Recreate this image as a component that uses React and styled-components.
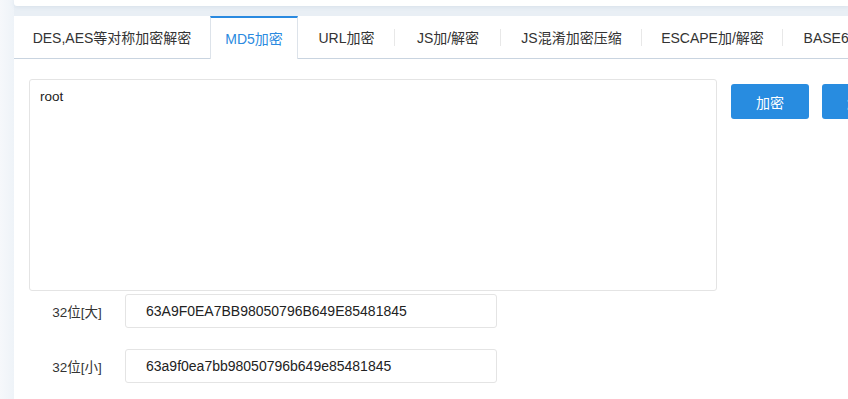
import styled, { createGlobalStyle } from "styled-components";

const GlobalStyle = createGlobalStyle`
  html, body {
    margin: 0;
    padding: 0;
    background: #e9eff5;
    overflow: hidden;
  }
  body {
    font-family: "Helvetica Neue", "Liberation Sans", "Noto Sans CJK SC", sans-serif;
    color: #333;
  }
`;

const Page = styled.div`
  display: flex;
  width: 100%;
  height: 399px;
`;

const Sidebar = styled.div`
  flex: 0 0 14px;
  background: linear-gradient(to right, #f6f8fb, #eef3f8);
`;

const Main = styled.div`
  flex: 1;
  min-width: 0;
  display: flex;
  flex-direction: column;
  gap: 10px;
`;

const TopBar = styled.div`
  height: 6px;
  background: #fff;
  border-bottom-left-radius: 3px;
  box-shadow: 0 1px 4px rgba(120, 150, 180, 0.15);
`;

const Card = styled.div`
  flex: 1;
  width: 900px;
  background: #fff;
  border-top-left-radius: 3px;
`;

const TabList = styled.div`
  display: flex;
  height: 42px;
  border-bottom: 1px solid #c9d4e0;
  white-space: nowrap;
`;

const Tab = styled.div`
  position: relative;
  box-sizing: border-box;
  flex: 0 0 ${(p) => p.$width}px;
  display: flex;
  align-items: center;
  justify-content: center;
  font-size: 14px;
  color: ${(p) => (p.$active ? "#2a8ae0" : "#333")};
  background: #fff;
  ${(p) =>
    p.$active &&
    `
    border-top: 2px solid #2a8ae0;
    border-left: 1px solid #dde3ea;
    border-right: 1px solid #dde3ea;
    margin-bottom: -1px;
    padding-bottom: 1px;
  `}
  &::after {
    content: "";
    display: ${(p) => (p.$sep ? "block" : "none")};
    position: absolute;
    right: 0;
    top: 13px;
    height: 17px;
    width: 1px;
    background: #e8e8e8;
  }
`;

const Content = styled.div`
  padding: 20px 0 0 15px;
`;

const EditorRow = styled.div`
  display: flex;
  align-items: flex-start;
  gap: 14px;
`;

const Editor = styled.textarea`
  box-sizing: border-box;
  width: 688px;
  height: 212px;
  padding: 9px 10px;
  border: 1px solid #e4e4e4;
  border-radius: 3px;
  resize: none;
  font-family: inherit;
  font-size: 13.5px;
  color: #222;
  outline: none;
`;

const Buttons = styled.div`
  display: flex;
  gap: 13px;
  padding-top: 5px;
`;

const Button = styled.button`
  width: 78px;
  height: 35px;
  border: none;
  border-radius: 3px;
  background: #288ce0;
  color: #fff;
  font-family: inherit;
  font-size: 14px;
`;

const Results = styled.div`
  display: flex;
  flex-direction: column;
  gap: 21px;
  margin-top: 3px;
`;

const ResultRow = styled.div`
  display: flex;
  align-items: center;
`;

const Label = styled.label`
  width: 96px;
  text-align: center;
  font-size: 13.5px;
  color: #333;
`;

const Output = styled.input`
  box-sizing: border-box;
  width: 372px;
  height: 34px;
  padding: 0 20px;
  border: 1px solid #e4e4e4;
  border-radius: 3px;
  font-family: inherit;
  font-size: 14px;
  color: #222;
  outline: none;
`;

const tabs = [
  { label: "DES,AES等对称加密解密", width: 196 },
  { label: "MD5加密", active: true, width: 88 },
  { label: "URL加密", sep: true, width: 97 },
  { label: "JS加/解密", sep: true, width: 106 },
  { label: "JS混淆加密压缩", sep: true, width: 141 },
  { label: "ESCAPE加/解密", sep: true, width: 141 },
  { label: "BASE64加/解密", sep: true, width: 140 },
];

export default function App() {
  return (
    <Page>
      <GlobalStyle />
      <Sidebar />
      <Main>
        <TopBar />
        <Card>
          <TabList>
            {tabs.map((t) => (
              <Tab key={t.label} $active={t.active} $sep={t.sep} $width={t.width}>
                {t.label}
              </Tab>
            ))}
          </TabList>
          <Content>
            <EditorRow>
              <Editor defaultValue="root" />
              <Buttons>
                <Button>加密</Button>
                <Button>解密</Button>
              </Buttons>
            </EditorRow>
            <Results>
              <ResultRow>
                <Label>32位[大]</Label>
                <Output readOnly value="63A9F0EA7BB98050796B649E85481845" />
              </ResultRow>
              <ResultRow>
                <Label>32位[小]</Label>
                <Output readOnly value="63a9f0ea7bb98050796b649e85481845" />
              </ResultRow>
            </Results>
          </Content>
        </Card>
      </Main>
    </Page>
  );
}
